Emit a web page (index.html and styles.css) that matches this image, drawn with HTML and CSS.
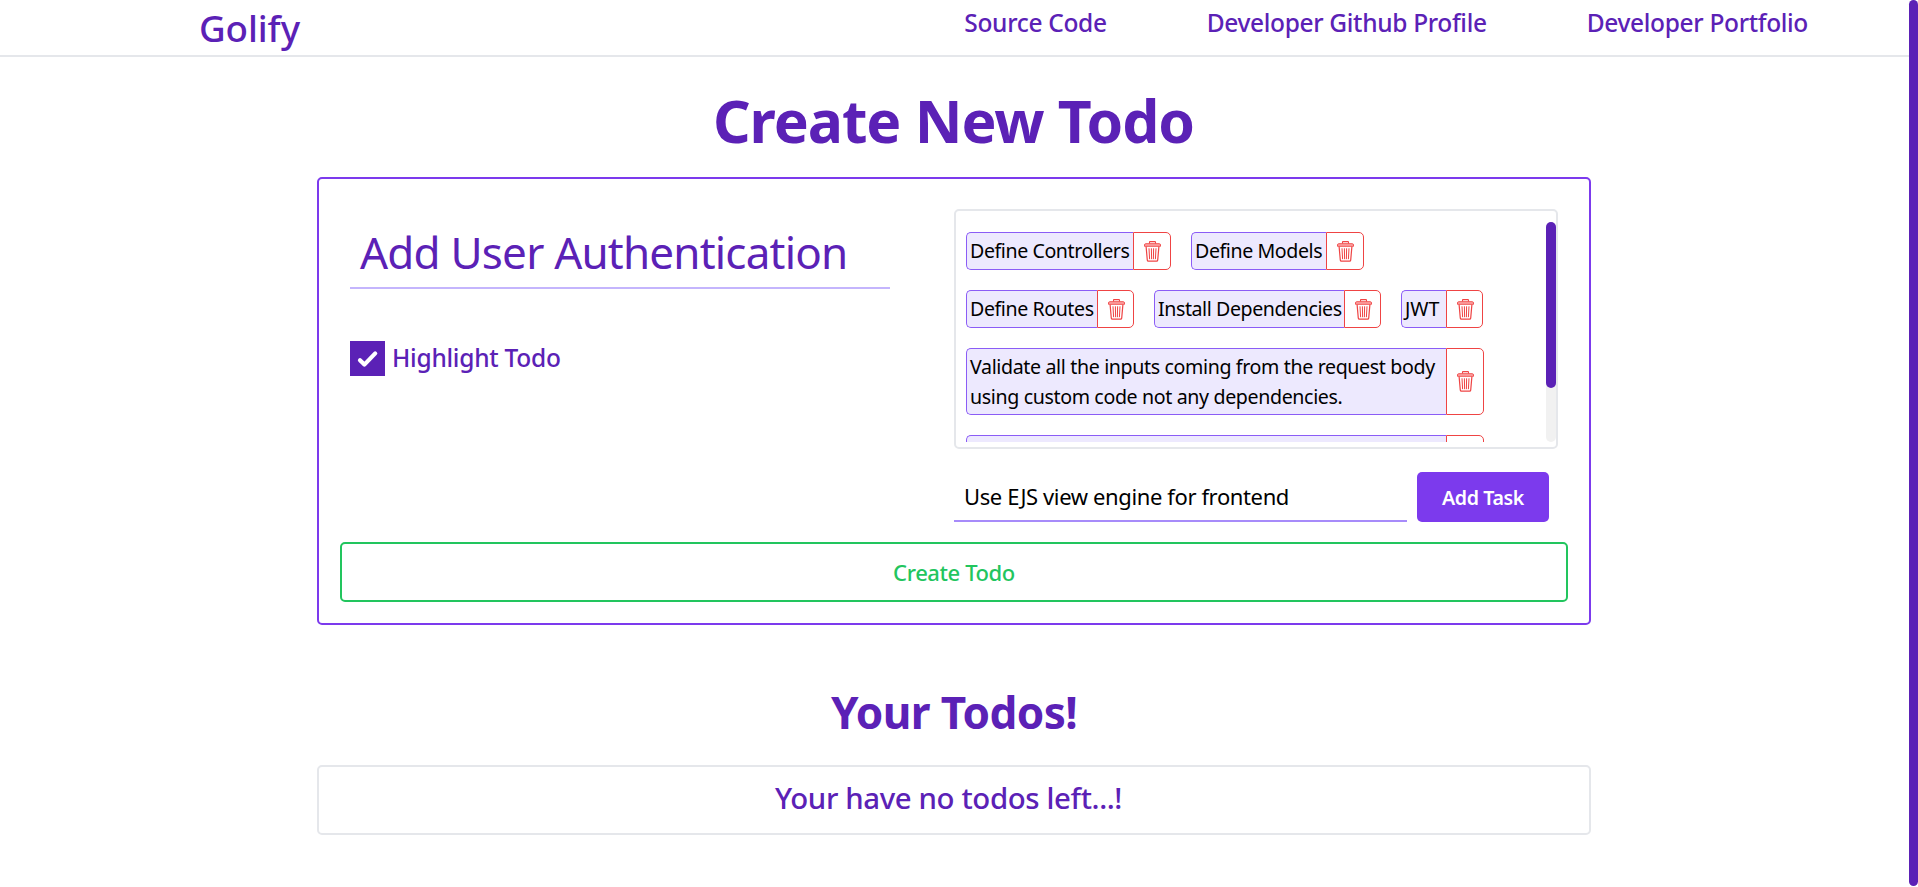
FILE: index.html
```html
<!DOCTYPE html>
<html lang="en">
<head>
<meta charset="utf-8">
<title>Golify</title>
<link rel="stylesheet" href="styles.css">
</head>
<body>
<svg class="defs" width="0" height="0" aria-hidden="true">
  <symbol id="trash" viewBox="0 0 17 21">
    <path d="M5.500 2.600V1.200Q5.500.600 6.100.600h4.800q.600 0 .600.600v1.400" fill="none" stroke="currentColor" stroke-width="1.100"/>
    <path d="M1.800 2.700h13.400q1.300 0 1.300 1.200v1.400H.500V3.900q0-1.200 1.300-1.200z" fill="#fca5a5" stroke="currentColor" stroke-width=".9"/>
    <path d="M2.100 5.600l1.200 13.500q.100 1 1.100 1h8.200q1 0 1.100-1l1.200-13.500" fill="none" stroke="currentColor" stroke-width="1.200"/>
    <path d="M5 7.300l.600 10.900M7.400 7.300l.200 10.900M9.600 7.300l-.200 10.900M12 7.300l-.600 10.900" fill="none" stroke="currentColor" stroke-width="1"/>
  </symbol>
</svg>
<div class="page">
  <header class="header">
    <a class="brand">Golify</a>
    <nav class="nav"><a>Source Code</a><a>Developer Github Profile</a><a>Developer Portfolio</a></nav>
  </header>
  <main class="main">
    <h1 class="title">Create New Todo</h1>
    <section class="card">
      <div class="columns">
        <div class="details">
          <div class="name-field">Add User Authentication</div>
          <div class="highlight">
            <span class="checkbox"><svg width="35" height="35" viewBox="0 0 35 35"><path d="M10 19.200l4.400 4.400L25.200 12.400" fill="none" stroke="#fff" stroke-width="4.200" stroke-linecap="round" stroke-linejoin="round"/></svg></span>
            <span>Highlight Todo</span>
          </div>
        </div>
        <div class="tasks">
          <div class="task-list">
            <div class="task-scroll">
              <div class="chip"><span class="chip-text w-controllers">Define Controllers</span><span class="chip-del"><svg><use href="#trash"/></svg></span></div>
              <div class="chip"><span class="chip-text w-models">Define Models</span><span class="chip-del"><svg><use href="#trash"/></svg></span></div>
              <div class="chip"><span class="chip-text w-routes">Define Routes</span><span class="chip-del"><svg><use href="#trash"/></svg></span></div>
              <div class="chip"><span class="chip-text w-install">Install Dependencies</span><span class="chip-del"><svg><use href="#trash"/></svg></span></div>
              <div class="chip"><span class="chip-text w-jwt">JWT</span><span class="chip-del"><svg><use href="#trash"/></svg></span></div>
              <div class="chip"><span class="chip-text w-full">Validate all the inputs coming from the request body<br>using custom code not any dependencies.</span><span class="chip-del"><svg><use href="#trash"/></svg></span></div>
              <div class="chip"><span class="chip-text w-full"></span><span class="chip-del"></span></div>
            </div>
            <div class="track"><div class="thumb"></div></div>
          </div>
          <div class="add-row">
            <div class="task-field">Use EJS view engine for frontend</div>
            <div class="add-btn">Add Task</div>
          </div>
        </div>
      </div>
      <div class="create-btn">Create Todo</div>
    </section>
    <h2 class="subtitle">Your Todos!</h2>
    <section class="empty">Your have no todos left...!</section>
  </main>
</div>
<div class="page-scroll"></div>
</body>
</html>
```
FILE: styles.css
```css
*{box-sizing:border-box}
body{margin:0;height:887px;overflow:hidden;display:flex;background:#fff;font-family:"Noto Sans","Open Sans",sans-serif;color:#5b21b6;white-space:nowrap}
.defs{position:absolute}
.page{width:1909px}
.page-scroll{width:9px;height:886px;border-radius:5px;background:#5b21b6}
.header{height:57px;padding:0 101px 0 199px;display:flex;justify-content:space-between;border-bottom:2px solid #e5e7eb}
.brand{font-size:36.75px;font-weight:500;line-height:56px;letter-spacing:-.1px}
.nav{display:flex;gap:100px;font-size:24.5px;font-weight:500;line-height:45px;letter-spacing:-.33px}
.main{width:1274px;margin:0 auto 0 317px;padding-top:25px}
.title,.subtitle{margin:0;text-align:center;font-weight:700}
.title{font-size:58.8px;line-height:76px;letter-spacing:-1.05px;margin-bottom:19px;padding-right:1px}
.card{height:448px;border:2px solid #7c3aed;border-radius:5px;padding:30px 21px 21px}
.columns{display:grid;grid-template-columns:540px 604px;column-gap:64px;padding-left:10px}
.name-field{margin-top:8px;height:72px;padding-left:10px;border-bottom:2px solid #c4b5fd;font-size:44px;font-weight:400;line-height:70px;letter-spacing:-.8px}
.highlight{margin-top:52px;display:flex;gap:7px;height:35px;font-size:24.5px;font-weight:500;line-height:34px;letter-spacing:-.25px}
.checkbox{width:35px;height:35px;background:#5b21b6}
.checkbox svg{display:block}
.task-list{height:240px;border:2px solid #e5e7eb;border-radius:5px;padding:11px 0 5px 10px;display:flex;justify-content:space-between}
.task-scroll{width:520px;height:220px;overflow:hidden;padding-top:10px;display:flex;flex-wrap:wrap;align-content:flex-start;gap:20px}
.chip{display:flex}
.chip-text{min-height:38px;padding:3px 0 2px 3px;border:1px solid #8b5cf6;border-right:0;border-radius:5px 0 0 5px;background:#ede9fe;color:#000;font-size:19.6px;line-height:30px;letter-spacing:-.42px}
.w-controllers{width:167px}
.w-models{width:135px}
.w-routes{width:131px}
.w-install{width:190px}
.w-jwt{width:45px;letter-spacing:0}
.w-full{width:480px;letter-spacing:-.36px}
.chip-del{width:38px;border:1px solid #ef4444;border-radius:0 5px 5px 0;color:#ef4444;display:flex;align-items:center;justify-content:center;padding-left:1px}
.w-routes+.chip-del,.w-install+.chip-del,.w-jwt+.chip-del{width:37px}
.chip-del svg{width:17px;height:21px}
.track{width:10px;height:220px;border-radius:5px;background:#f1f1f1}
.thumb{height:166px;border-radius:5px;background:#5b21b6}
.add-row{margin-top:23px;display:flex;gap:10px;height:50px}
.task-field{width:453px;padding-left:10px;border-bottom:2px solid #a78bfa;color:#000;font-size:22px;line-height:48px;letter-spacing:-.38px}
.add-btn{width:132px;border-radius:5px;background:#7c3aed;color:#fff;text-align:center;font-size:19.6px;font-weight:600;line-height:51px;letter-spacing:-.37px}
.create-btn{margin-top:20px;height:60px;border:2px solid #22c55e;border-radius:5px;color:#22c55e;text-align:center;font-size:22px;font-weight:550;line-height:57px;letter-spacing:-.4px}
.subtitle{margin:57px 0 23px;font-size:44.1px;line-height:60px;letter-spacing:-.6px}
.empty{height:70px;border:2px solid #e5e7eb;border-radius:5px;padding-right:11px;text-align:center;font-size:29.4px;font-weight:500;line-height:62px;letter-spacing:-.38px}
```
